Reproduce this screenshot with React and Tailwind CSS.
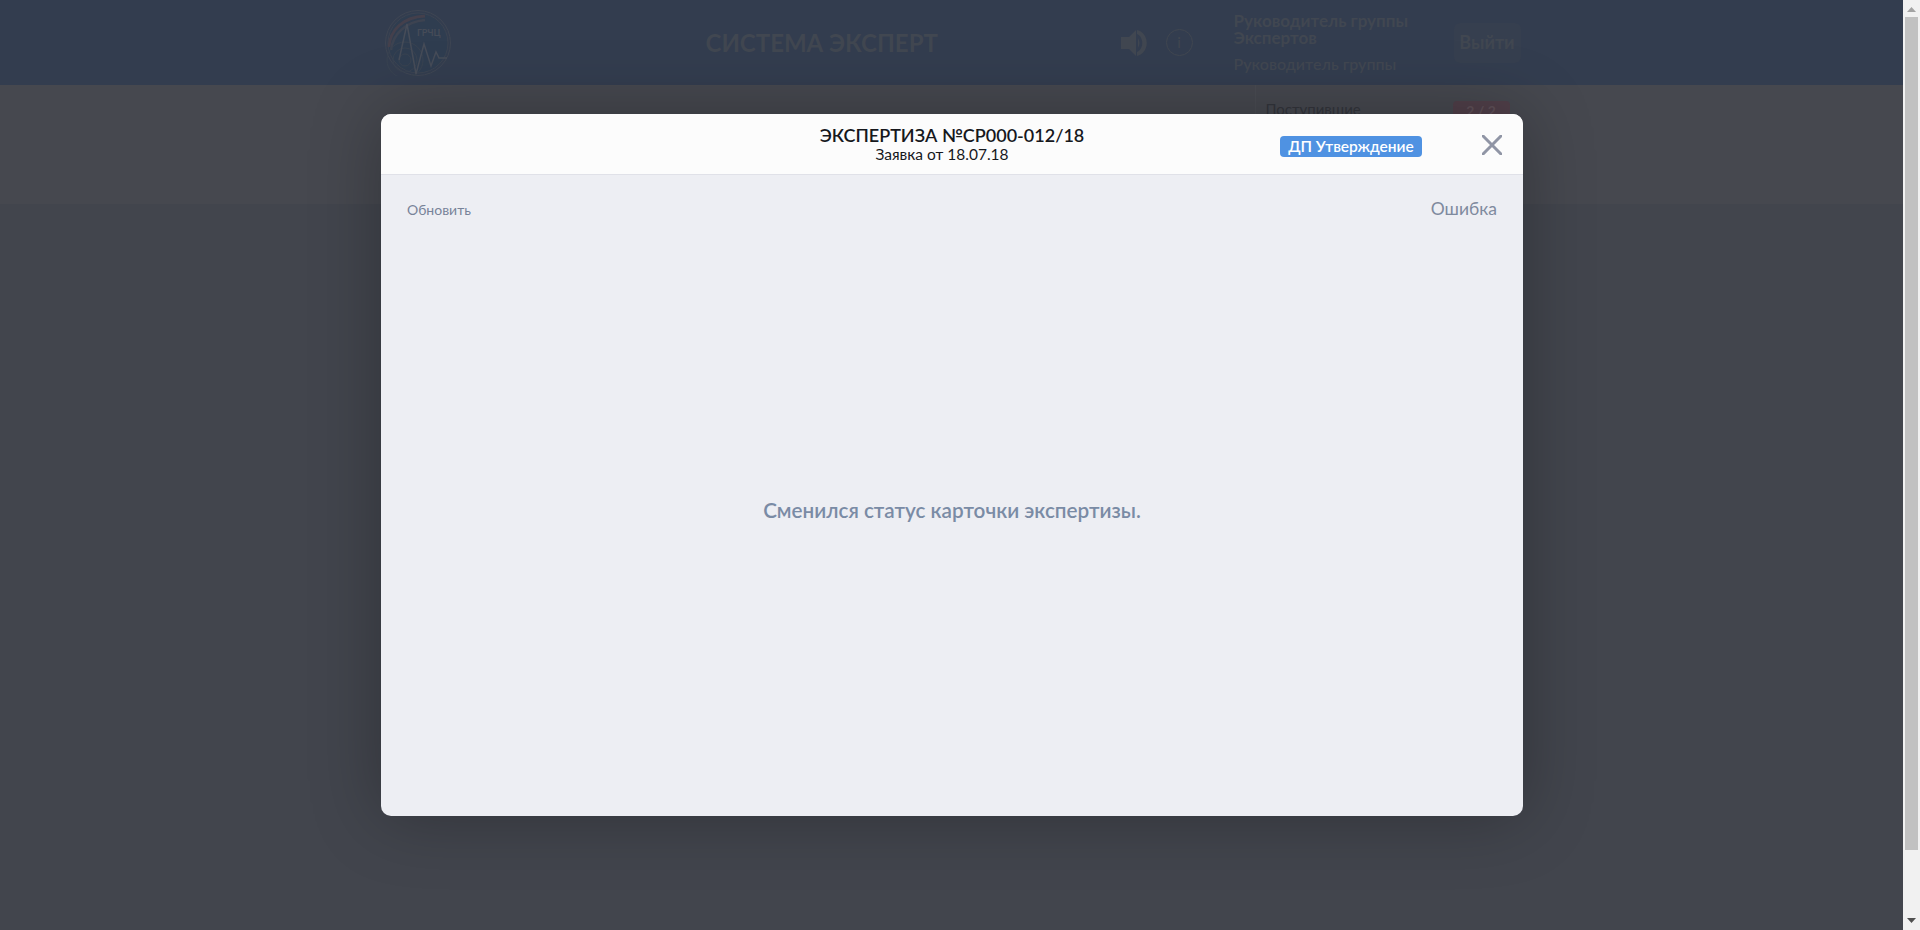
export default function App() {
  const sans = "font-['Lato','Noto_Sans',sans-serif]";
  return (
    <div className={`relative flex h-[930px] w-full overflow-hidden bg-[#42454d] ${sans}`}>
      <div className="flex min-w-0 flex-1 flex-col">
        <header className="flex h-[85px] shrink-0 justify-center bg-[#333d4f]">
          <div className="flex w-[1142px] items-center">
            <svg viewBox="0 0 66 66" className="ml-[4px] h-[66px] w-[66px] shrink-0" fill="none" stroke="#434a56" strokeWidth="1">
              <circle cx="33" cy="33" r="32.500" stroke="#3f4653" />
              <circle cx="33" cy="33" r="30" fill="#2f3d50" stroke="#3c4452" />
              <path d="M4 37C5 20 18 7 40 6" stroke="#44404c" strokeWidth="3" />
              <path d="M6 40C8 24 20 12 40 10" stroke="#3d4351" strokeWidth="2.500" />
              <circle cx="20" cy="50" r="18" stroke="#394351" />
              <circle cx="20" cy="50" r="12" stroke="#394351" />
              <circle cx="20" cy="50" r="6" stroke="#394351" />
              <path d="M14 50 22 14l9 50 8-30 7 22 5-14 3 6h8" stroke="#464c58" strokeWidth="1.500" />
              <text x="32" y="26" fontSize="9" fontWeight="700" fill="#464c58" stroke="none">ГРЧЦ</text>
            </svg>
            <div className="ml-[255px] w-[415px] text-[24px] font-bold leading-none text-[#414751]">СИСТЕМА ЭКСПЕРТ</div>
            <svg viewBox="0 0 28 26" className="h-[26px] w-[28px] shrink-0">
              <path d="M0 7h8l7-7v26l-7-7H0z" fill="#414751" />
              <path d="M17 8c2 3 2 7 0 10z" fill="#414751" />
              <path d="M16 0c13 3 13 23 0 26v-4c7-3 7-15 0-18z" fill="#414751" />
            </svg>
            <div className="ml-[17px] flex h-[27px] w-[27px] shrink-0 items-center justify-center rounded-full border-[1.500px] border-[#414751] text-[15px] leading-none text-[#414751]">i</div>
            <div className="ml-[41px] w-[220px] font-bold text-[#414751]">
              <div className="text-[17px] leading-[17px]">Руководитель группы Экспертов</div>
              <div className="mt-[9px] text-[16px] font-semibold leading-[18px]">Руководитель группы</div>
            </div>
            <div className="flex h-[40px] w-[67px] items-center justify-center rounded-md bg-[#363f4f] text-[18px] font-bold text-[#414751]">Выйти</div>
          </div>
        </header>
        <div className="flex h-[119px] shrink-0 justify-center bg-[#46484f]">
          <div className="flex w-[1142px] justify-end">
            <div className="flex h-full w-[268px] items-start justify-between border-l border-[#4a4c53] pl-[10px] pr-[12px] pt-[17px] text-[#33353c]">
              <span className="text-[15px] leading-none">Поступившие</span>
              <span className="mr-[1px] mt-[-1px] flex h-[18px] w-[57px] items-center justify-center rounded bg-[#503f49] text-[14px] font-bold text-[#5f5058]">2 / 2</span>
            </div>
          </div>
        </div>
      </div>
      <div className="flex w-[17px] shrink-0 flex-col items-center bg-[#f1f1f1]">
        <svg viewBox="0 0 9 5" className="mt-[7px] h-[5px] w-[9px] fill-[#a3a3a3]"><path d="M4.500 0 9 5H0z" /></svg>
        <div className="mt-[5px] h-[833px] w-[13px] bg-[#c1c1c1]" />
        <svg viewBox="0 0 9 5" className="mt-auto mb-[7px] h-[5px] w-[9px] fill-[#505050]"><path d="M0 0h9L4.500 5z" /></svg>
      </div>

      <div className="absolute left-[381px] top-[114px] flex h-[702px] w-[1142px] flex-col overflow-hidden rounded-[10px] bg-[#edeef3] shadow-[0_0_70px_rgba(0,0,0,0.28)]">
        <div className="relative flex h-[61px] shrink-0 flex-col items-center border-b border-[#e0e1e8] bg-[#fcfcfc] pt-[11px] text-[#16181d]">
          <div className="text-[18px] font-semibold leading-[20px]">ЭКСПЕРТИЗА №СР000-012/18</div>
          <div className="mt-[1px] pr-[20px] text-[15.500px] leading-[17px]">Заявка от 18.07.18</div>
          <span className="absolute left-[899px] top-[22px] flex h-[21px] w-[142px] items-center justify-center rounded bg-[#4f92e2] text-[15.500px] font-semibold text-white">ДП Утверждение</span>
          <svg viewBox="0 0 20 20" className="absolute right-[21px] top-[21px] h-[20px] w-[20px]" stroke="#9095a5" strokeWidth="3">
            <path d="M0 0l20 20M20 0 0 20" />
          </svg>
        </div>
        <div className="flex flex-1 flex-col px-[26px]">
          <div className="flex items-start justify-between pt-[24px]">
            <span className="mt-[2px] text-[14px] leading-[18px] text-[#788399]">Обновить</span>
            <span className="text-[17.500px] leading-[20px] text-[#7f8a9e]">Ошибка</span>
          </div>
          <div className="mt-[279px] text-center text-[20.700px] font-semibold leading-[24px] text-[#7a8ba5]">Сменился статус карточки экспертизы.</div>
        </div>
      </div>
    </div>
  );
}
